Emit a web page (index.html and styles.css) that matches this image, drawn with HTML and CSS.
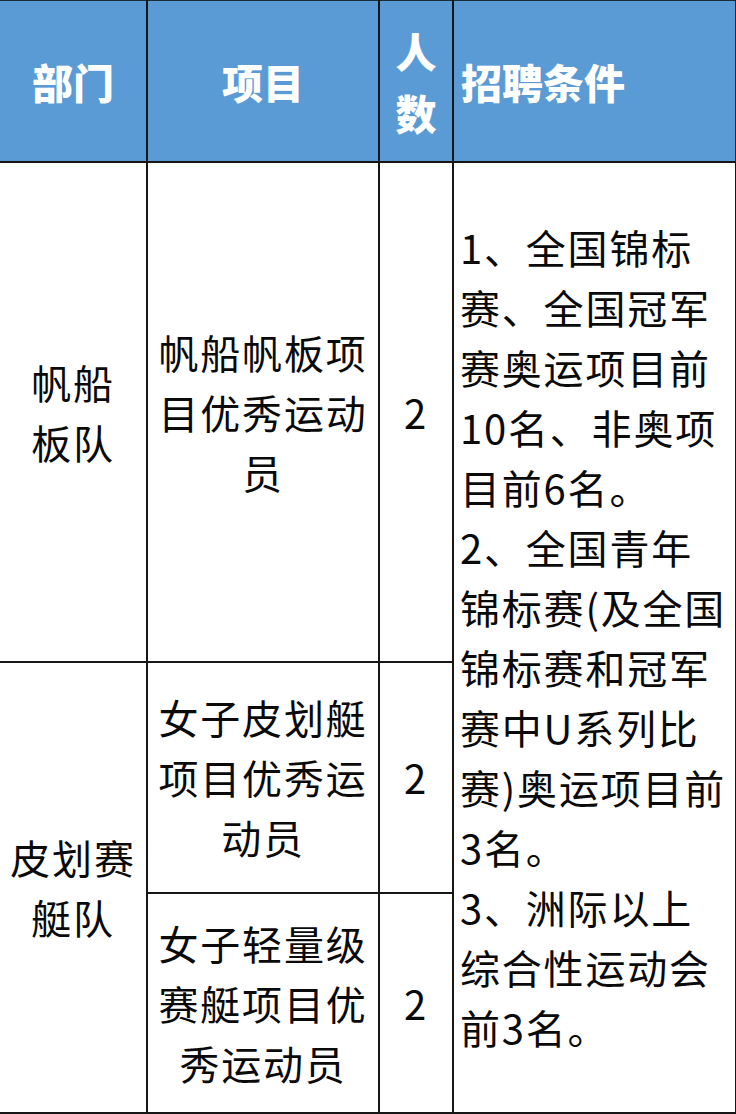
FILE: index.html
```html
<!DOCTYPE html>
<html lang="zh-CN">
<head>
<meta charset="utf-8">
<link rel="stylesheet" href="styles.css">
</head>
<body>
<table class="recruit">
  <colgroup>
    <col class="c-dept">
    <col class="c-proj">
    <col class="c-num">
    <col class="c-cond">
  </colgroup>
  <thead>
    <tr class="head-row">
      <th class="center">部门</th>
      <th class="center">项目</th>
      <th class="center tall">人<br>数</th>
      <th class="left">招聘条件</th>
    </tr>
  </thead>
  <tbody>
    <tr class="r1">
      <td class="center">帆船<br>板队</td>
      <td class="center">帆船帆板项<br>目优秀运动<br>员</td>
      <td class="center">2</td>
      <td class="cond" rowspan="3">1、全国锦标<br>赛、全国冠军<br>赛奥运项目前<br>10名、非奥项<br>目前6名。<br>2、全国青年<br>锦标赛(及全国<br>锦标赛和冠军<br>赛中U系列比<br>赛)奥运项目前<br>3名。<br>3、洲际以上<br>综合性运动会<br>前3名。</td>
    </tr>
    <tr class="r2">
      <td class="center" rowspan="2">皮划赛<br>艇队</td>
      <td class="center">女子皮划艇<br>项目优秀运<br>动员</td>
      <td class="center">2</td>
    </tr>
    <tr class="r3">
      <td class="center">女子轻量级<br>赛艇项目优<br>秀运动员</td>
      <td class="center">2</td>
    </tr>
  </tbody>
</table>
</body>
</html>
```

FILE: styles.css
```css
html, body {
  margin: 0;
  padding: 0;
  background: #ffffff;
}

.recruit {
  width: 736px;
  table-layout: fixed;
  border-collapse: collapse;
  font-family: "Noto Sans CJK SC", "Noto Sans", sans-serif;
  color: #0a0a0a;
}

.c-dept { width: 147px; }
.c-proj { width: 232px; }
.c-num { width: 74px; }
.c-cond { width: 283px; }

.recruit th,
.recruit td {
  border: 2px solid #161616;
  padding: 0;
  white-space: nowrap;
  overflow: hidden;
}

.recruit th:first-child,
.recruit td:first-child {
  border-left: 0;
}

.recruit thead th {
  border-top: 1px solid #1d2a3a;
}

.head-row {
  height: 161px;
}

.head-row th {
  background: #5b9bd5;
  color: #ffffff;
  font-size: 41px;
  font-weight: 900;
  line-height: 62px;
  vertical-align: middle;
}

.r1 { height: 500px; }
.r2 { height: 231px; }
.r3 { height: 220px; }

.recruit td {
  font-size: 40px;
  font-weight: 400;
  line-height: 60px;
  vertical-align: middle;
  letter-spacing: 1.8px;
}

.center {
  text-align: center;
}

.left {
  text-align: left;
  padding-left: 7px !important;
}

.cond {
  text-align: left;
  padding-left: 6px !important;
}
```
